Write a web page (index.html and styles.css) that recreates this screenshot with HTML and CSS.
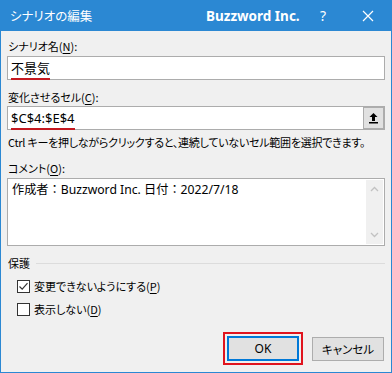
FILE: index.html
```html
<!DOCTYPE html>
<html lang="ja">
<head>
<meta charset="utf-8">
<link rel="stylesheet" href="styles.css">
</head>
<body>
<div class="window">
  <div class="titlebar">
    <span class="title">シナリオの編集</span>
    <span class="brand">Buzzword Inc.</span>
    <span class="help">?</span>
    <span class="close">
      <svg width="12" height="12" viewBox="0 0 12 12"><path d="M1 1L11 11M11 1L1 11" stroke="#fff" stroke-width="1.2" fill="none"/></svg>
    </span>
  </div>
  <div class="content">
    <div class="label l1">シナリオ名(<u>N</u>):</div>
    <div class="field">
      <span class="val marked">不景気</span>
    </div>
    <div class="label l2">変化させるセル(<u>C</u>):</div>
    <div class="field field-ref">
      <span class="val marked">$C$4:$E$4</span>
      <span class="refbtn">
        <svg width="11" height="12" viewBox="0 0 11 12"><path d="M5.5 1L1.5 5H4V9H7V5H9.5Z" fill="#000"/><rect x="1" y="10" width="9" height="1.5" fill="#000"/></svg>
      </span>
    </div>
    <div class="hint">Ctrl キーを押しながらクリックすると、連続していないセル範囲を選択できます。</div>
    <div class="label l3">コメント(<u>O</u>):</div>
    <div class="textarea">
      <div class="ta-text">作成者：Buzzword Inc. 日付：2022/7/18</div>
      <div class="scroll">
        <svg width="9" height="6" viewBox="0 0 9 6"><path d="M1 5L4.5 1.5L8 5" stroke="#c2c2c2" stroke-width="1.3" fill="none"/></svg>
        <svg width="9" height="6" viewBox="0 0 9 6"><path d="M1 1L4.5 4.5L8 1" stroke="#c2c2c2" stroke-width="1.3" fill="none"/></svg>
      </div>
    </div>
    <div class="group">
      <span class="group-title">保護</span>
      <span class="group-line"></span>
    </div>
    <div class="check c1">
      <span class="box">
        <svg width="11" height="11" viewBox="0 0 11 11"><path d="M1.5 5.5L4.2 8.2L9.5 2.2" stroke="#333" stroke-width="1.2" fill="none"/></svg>
      </span>
      <span>変更できないようにする(<u>P</u>)</span>
    </div>
    <div class="check c2">
      <span class="box"></span>
      <span>表示しない(<u>D</u>)</span>
    </div>
    <div class="buttons">
      <div class="hl"><div class="btn ok">OK</div></div>
      <div class="btn cancel">キャンセル</div>
    </div>
  </div>
</div>
</body>
</html>
```
FILE: styles.css
```css
html, body {
  margin: 0;
  padding: 0;
  background: #f0f0f0;
}
body {
  font-family: "Noto Sans", "Noto Sans CJK JP", sans-serif;
  font-size: 12px;
  color: #000;
}
.window {
  width: 392px;
  height: 373px;
  box-sizing: border-box;
  border: 1px solid #2b88d3;
  border-top: none;
  background: #f0f0f0;
  display: flex;
  flex-direction: column;
}
.titlebar {
  height: 31px;
  background: #2b88d3;
  margin: 0 -1px;
  display: flex;
  align-items: center;
  color: #fff;
  flex-shrink: 0;
}
.title {
  font-family: "Noto Sans CJK JP", sans-serif;
  font-feature-settings: "palt";
  font-size: 12.5px;
  margin-left: 10px;
  width: 196px;
  flex-shrink: 0;
}
.brand {
  font-family: "Noto Sans", sans-serif;
  font-weight: 700;
  font-size: 13.5px;
  width: 114px;
  flex-shrink: 0;
  white-space: nowrap;
}
.help {
  font-family: "Noto Sans", sans-serif;
  font-size: 14px;
  width: 42px;
  flex-shrink: 0;
}
.close {
  display: flex;
  align-items: center;
}
.content {
  padding: 0 6px 0 6px;
  display: flex;
  flex-direction: column;
}
.label, .hint, .check, .group-title {
  font-family: "Noto Sans CJK JP", sans-serif;
  font-feature-settings: "palt";
  font-size: 11px;
  line-height: 16px;
  white-space: nowrap;
}
.label u, .check u { text-underline-offset: 2px; }
.l1 { margin-top: 7px; padding-left: 1px; }
.l2 { margin-top: 9px; padding-left: 1px; }
.l3 { margin-top: 10px; padding-left: 1px; }
.field {
  margin-top: 2px;
  height: 24px;
  box-sizing: border-box;
  border: 1px solid #acacac;
  background: #fff;
  display: flex;
  align-items: center;
  padding-left: 3px;
  position: relative;
}
.field-ref { margin-top: 1px; }
.val {
  font-family: "Noto Sans", "Noto Sans CJK JP", sans-serif;
  font-size: 13px;
  line-height: 18px;
  position: relative;
}
.marked::after {
  content: "";
  position: absolute;
  left: 0;
  right: 0;
  bottom: -3px;
  height: 2px;
  background: #c4181f;
}
.refbtn {
  position: absolute;
  right: 0;
  top: 0;
  width: 21px;
  height: 22px;
  box-sizing: border-box;
  background: #e1e1e1;
  border: 1px solid #adadad;
  display: flex;
  align-items: center;
  justify-content: center;
}
.hint {
  margin-top: 4px;
  padding-left: 1px;
  letter-spacing: -0.25px;
}
.textarea {
  margin-top: 2px;
  height: 68px;
  box-sizing: border-box;
  border: 1px solid #acacac;
  background: #fff;
  display: flex;
  justify-content: space-between;
}
.ta-text {
  font-family: "Noto Sans", "Noto Sans CJK JP", sans-serif;
  font-size: 12.2px;
  padding: 3px 0 0 4px;
  line-height: 16px;
}
.scroll {
  width: 17px;
  margin: 1px 1px 1px 0;
  background: #f0f0f0;
  display: flex;
  flex-direction: column;
  justify-content: space-between;
  align-items: center;
  padding: 6px 0 6px;
}
.group {
  margin-top: 9px;
  display: flex;
  align-items: center;
}
.group-title { padding-left: 1px; }
.group-line {
  flex: 1;
  height: 1px;
  background: #dcdcdc;
  margin-left: 6px;
}
.check {
  display: flex;
  align-items: center;
  padding-left: 10px;
}
.c1 { margin-top: 7px; }
.c2 { margin-top: 7px; }
.box {
  width: 13px;
  height: 13px;
  box-sizing: border-box;
  border: 1px solid #333;
  background: #fff;
  margin-right: 4px;
  display: flex;
  align-items: center;
  justify-content: center;
}
.buttons {
  margin-top: 15px;
  display: flex;
  justify-content: flex-end;
  align-items: center;
  gap: 9px;
  padding-right: 1px;
}
.hl {
  border: 2px solid #e0141e;
  padding: 2px;
}
.btn {
  width: 72px;
  height: 25px;
  box-sizing: border-box;
  background: #e1e1e1;
  display: flex;
  align-items: center;
  justify-content: center;
  font-family: "Noto Sans CJK JP", sans-serif;
  font-feature-settings: "palt";
  font-size: 11.5px;
}
.ok {
  border: 2px solid #0078d7;
  font-family: "Noto Sans", sans-serif;
  font-size: 12px;
}
.cancel {
  border: 1px solid #adadad;
  height: 24px;
}
```
